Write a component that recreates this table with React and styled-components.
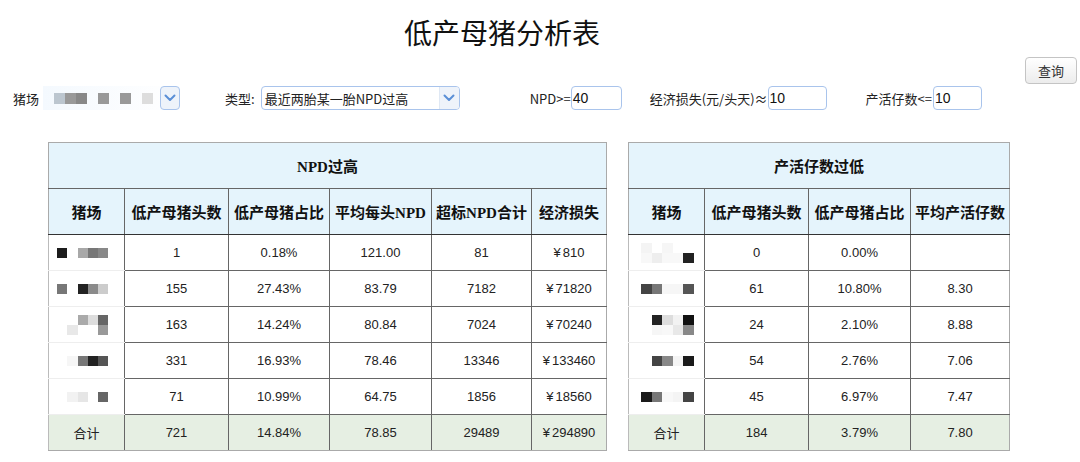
import React from "react";
import styled, { createGlobalStyle } from "styled-components";

const GlobalStyle = createGlobalStyle`
  body {
    margin: 0;
    background: #ffffff;
    color: #222;
    font-family: "Liberation Sans", "Noto Sans CJK SC", sans-serif;
  }
`;

const npdRows = [
  { farm: [["#1c1c1c", null, "#a8a8a8", "#777", "#888"]], count: "1", ratio: "0.18%", avg: "121.00", over: "81", loss: "810" },
  { farm: [["#777", null, "#222", "#8a8a8a", "#ccc"]], count: "155", ratio: "27.43%", avg: "83.79", over: "7182", loss: "71820" },
  { farm: [[null, null, "#aaa", "#ddd", "#666"], [null, "#e8e8e8", null, null, "#999"]], count: "163", ratio: "14.24%", avg: "80.84", over: "7024", loss: "70240" },
  { farm: [[null, "#f6f6f6", "#777", "#222", "#555"]], count: "331", ratio: "16.93%", avg: "78.46", over: "13346", loss: "133460" },
  { farm: [[null, "#f2f2f2", "#e6e6e6", null, "#666"]], count: "71", ratio: "10.99%", avg: "64.75", over: "1856", loss: "18560" },
];

const liveRows = [
  { farm: [["#f4f4f4", null, "#f6f6f6", null, null], ["#f8f8f8", "#eee", "#f8f8f8", "#f8f8f8", "#222"]], count: "0", ratio: "0.00%", avg: "" },
  { farm: [["#444", "#777", "#f6f6f6", "#f6f6f6", "#555"]], count: "61", ratio: "10.80%", avg: "8.30" },
  { farm: [[null, "#222", "#ddd", "#f2f2f2", "#111"], [null, "#f6f6f6", "#f8f8f8", "#e8e8e8", "#888"]], count: "24", ratio: "2.10%", avg: "8.88" },
  { farm: [[null, "#444", "#888", "#f4f4f4", "#1a1a1a"]], count: "54", ratio: "2.76%", avg: "7.06" },
  { farm: [["#1a1a1a", "#777", "#f8f8f8", "#f4f4f4", "#444"]], count: "45", ratio: "6.97%", avg: "7.47" },
];

const Page = styled.div`
  width: 1080px;
  height: 462px;
  overflow: hidden;
`;

const Title = styled.h1`
  margin: 0;
  padding: 15px 76px 0 0;
  height: 42px;
  text-align: center;
  font-family: "Noto Sans CJK SC", sans-serif;
  font-size: 28px;
  font-weight: 400;
  line-height: 34px;
  color: #111;
`;

const ButtonBar = styled.div`
  display: flex;
  justify-content: flex-end;
  padding-right: 3px;
`;

const QueryButton = styled.button`
  width: 52px;
  height: 27px;
  border: 1px solid #c4c4c4;
  border-radius: 4px;
  background: linear-gradient(#ffffff, #ececec);
  font-family: "Noto Sans CJK SC", sans-serif;
  font-size: 13px;
  color: #333;
  padding: 0;
`;

const FilterRow = styled.div`
  display: flex;
  align-items: center;
  height: 24px;
  margin-top: 2px;
  padding-left: 13px;
  font-size: 13px;
  font-family: "Noto Sans CJK SC", sans-serif;
`;

const Field = styled.div`
  display: flex;
  align-items: center;
  margin-left: ${(p) => p.$gap || 0}px;
`;

const Label = styled.span`
  white-space: nowrap;
  margin-right: ${(p) => p.$space || 0}px;
`;

const FarmSelect = styled.div`
  display: flex;
  align-items: center;
  width: 137px;
  height: 24px;
  background: linear-gradient(90deg, #f4f9fe, #ffffff);
`;

const SelectBox = styled.div`
  display: flex;
  align-items: center;
  width: ${(p) => p.$width}px;
  height: 24px;
  box-sizing: border-box;
  border: 1px solid #a9c4ec;
  border-radius: 4px;
  overflow: hidden;
`;

const SelectText = styled.span`
  flex: 1;
  padding-left: 3px;
  white-space: nowrap;
`;

const ArrowBox = styled.div`
  display: flex;
  align-items: center;
  justify-content: center;
  width: 20px;
  height: 24px;
  box-sizing: border-box;
  background: #eef3fa;
  border-left: 1px solid #dfe8f4;
  ${(p) =>
    p.$alone &&
    `
    border: 1px solid #a9c4ec;
    border-radius: 4px;
    margin-left: auto;
  `}
`;

const TextInput = styled.div`
  width: ${(p) => p.$width}px;
  height: 24px;
  box-sizing: border-box;
  border: 1px solid #a9c4ec;
  border-radius: 4px;
  padding-left: 1px;
  line-height: 22px;
  font-family: "Liberation Sans", sans-serif;
  font-size: 14px;
  color: #111;
`;

const Tables = styled.div`
  display: flex;
  align-items: flex-start;
  gap: 21px;
  margin-top: 32px;
  padding-left: 48px;
`;

const Table = styled.table`
  width: ${(p) => p.$width}px;
  border-collapse: collapse;
  table-layout: fixed;
  border: 1px solid #aaa;
  font-size: 13px;
`;

const Col = styled.col`
  width: ${(p) => p.$w}px;
`;

const GroupHead = styled.th`
  height: 45px;
  padding: 0;
  background: #e5f4fc;
  border: 1px solid #aaa;
  border-bottom: 1px solid #666;
  font-family: "Liberation Serif", "Noto Sans CJK SC", serif;
  font-weight: 700;
  font-size: 15px;
  color: #111;
`;

const HeadCell = styled.th`
  height: 45px;
  padding: 0;
  background: #e5f4fc;
  border-left: 1px solid #666;
  border-right: 1px solid #666;
  border-bottom: 1px solid #333;
  font-family: "Liberation Serif", "Noto Sans CJK SC", serif;
  font-weight: 700;
  font-size: 15px;
  color: #111;
  white-space: nowrap;
  &:first-child {
    border-left-color: #aaa;
  }
  &:last-child {
    border-right-color: #aaa;
  }
`;

const Row = styled.tr`
  height: 36px;
  background: ${(p) => (p.$total ? "#e6efe3" : "#ffffff")};
`;

const Cell = styled.td`
  padding: 0;
  text-align: center;
  border: 1px solid #666;
  color: #222;
  &:first-child {
    border-left-color: #bbb;
  }
  &:last-child {
    border-right-color: #aaa;
  }
  ${Row}:last-child & {
    border-bottom-color: #aaa;
  }
`;

const FarmCell = styled(Cell)`
  padding-left: ${(p) => p.$inset}px;
  text-align: left;
  border-bottom-color: #eee;
  border-top-color: #eee;
`;

const Yen = styled.span`
  margin-right: 2px;
`;

const Mosaic = styled.div`
  display: grid;
  grid-template-columns: repeat(5, ${(p) => p.$size}px);
  grid-auto-rows: 10px;
`;

const Tile = styled.div`
  background: ${(p) => p.$shade || "transparent"};
`;

const BlurTile = styled(Tile)`
  width: 11px;
  height: 11px;
`;

function Chevron() {
  return (
    <svg width="12" height="8" viewBox="0 0 12 8">
      <path d="M1.5 1.5 L6 6 L10.5 1.5" fill="none" stroke="#5b8fd6" strokeWidth="2" strokeLinecap="round" strokeLinejoin="round" />
    </svg>
  );
}

function Pixels({ rows, size }) {
  return (
    <Mosaic $size={size}>
      {rows.flat().map((shade, i) => (
        <Tile key={i} $shade={shade} />
      ))}
    </Mosaic>
  );
}

function Money({ value }) {
  return (
    <>
      <Yen>¥</Yen>
      {value}
    </>
  );
}

const farmBlur = [null, "#bcc6cf", "#999", "#888", null, "#999", null, "#999", null, "#ddd"];

function Filters() {
  return (
    <FilterRow>
      <Field>
        <Label $space={4}>猪场</Label>
        <FarmSelect>
          {farmBlur.map((shade, i) => (
            <BlurTile key={i} $shade={shade} />
          ))}
          <ArrowBox $alone>
            <Chevron />
          </ArrowBox>
        </FarmSelect>
      </Field>
      <Field $gap={45}>
        <Label $space={6}>类型:</Label>
        <SelectBox $width={199}>
          <SelectText>最近两胎某一胎NPD过高</SelectText>
          <ArrowBox>
            <Chevron />
          </ArrowBox>
        </SelectBox>
      </Field>
      <Field $gap={70}>
        <Label>NPD&gt;=</Label>
        <TextInput $width={51}>40</TextInput>
      </Field>
      <Field $gap={28}>
        <Label>经济损失(元/头天)≈</Label>
        <TextInput $width={59}>10</TextInput>
      </Field>
      <Field $gap={39}>
        <Label $space={1}>产活仔数&lt;=</Label>
        <TextInput $width={49}>10</TextInput>
      </Field>
    </FilterRow>
  );
}

function TableHead({ title, heads, widths }) {
  return (
    <>
      <colgroup>
        {widths.map((w, i) => (
          <Col key={i} $w={w} />
        ))}
      </colgroup>
      <thead>
        <tr>
          <GroupHead colSpan={heads.length}>{title}</GroupHead>
        </tr>
        <tr>
          {heads.map((h) => (
            <HeadCell key={h}>{h}</HeadCell>
          ))}
        </tr>
      </thead>
    </>
  );
}

function NpdTable() {
  return (
    <Table $width={558}>
      <TableHead
        title="NPD过高"
        widths={[76, 104, 101, 102, 100, 75]}
        heads={["猪场", "低产母猪头数", "低产母猪占比", "平均每头NPD", "超标NPD合计", "经济损失"]}
      />
      <tbody>
        {npdRows.map((r, i) => (
          <Row key={i}>
            <FarmCell $inset={8}>
              <Pixels rows={r.farm} size={10.3} />
            </FarmCell>
            <Cell>{r.count}</Cell>
            <Cell>{r.ratio}</Cell>
            <Cell>{r.avg}</Cell>
            <Cell>{r.over}</Cell>
            <Cell>
              <Money value={r.loss} />
            </Cell>
          </Row>
        ))}
        <Row $total>
          <Cell>合计</Cell>
          <Cell>721</Cell>
          <Cell>14.84%</Cell>
          <Cell>78.85</Cell>
          <Cell>29489</Cell>
          <Cell>
            <Money value="294890" />
          </Cell>
        </Row>
      </tbody>
    </Table>
  );
}

function LiveTable() {
  return (
    <Table $width={381}>
      <TableHead
        title="产活仔数过低"
        widths={[76, 104, 102, 99]}
        heads={["猪场", "低产母猪头数", "低产母猪占比", "平均产活仔数"]}
      />
      <tbody>
        {liveRows.map((r, i) => (
          <Row key={i}>
            <FarmCell $inset={12}>
              <Pixels rows={r.farm} size={10.6} />
            </FarmCell>
            <Cell>{r.count}</Cell>
            <Cell>{r.ratio}</Cell>
            <Cell>{r.avg}</Cell>
          </Row>
        ))}
        <Row $total>
          <Cell>合计</Cell>
          <Cell>184</Cell>
          <Cell>3.79%</Cell>
          <Cell>7.80</Cell>
        </Row>
      </tbody>
    </Table>
  );
}

export default function App() {
  return (
    <Page>
      <GlobalStyle />
      <Title>低产母猪分析表</Title>
      <ButtonBar>
        <QueryButton>查询</QueryButton>
      </ButtonBar>
      <Filters />
      <Tables>
        <NpdTable />
        <LiveTable />
      </Tables>
    </Page>
  );
}
